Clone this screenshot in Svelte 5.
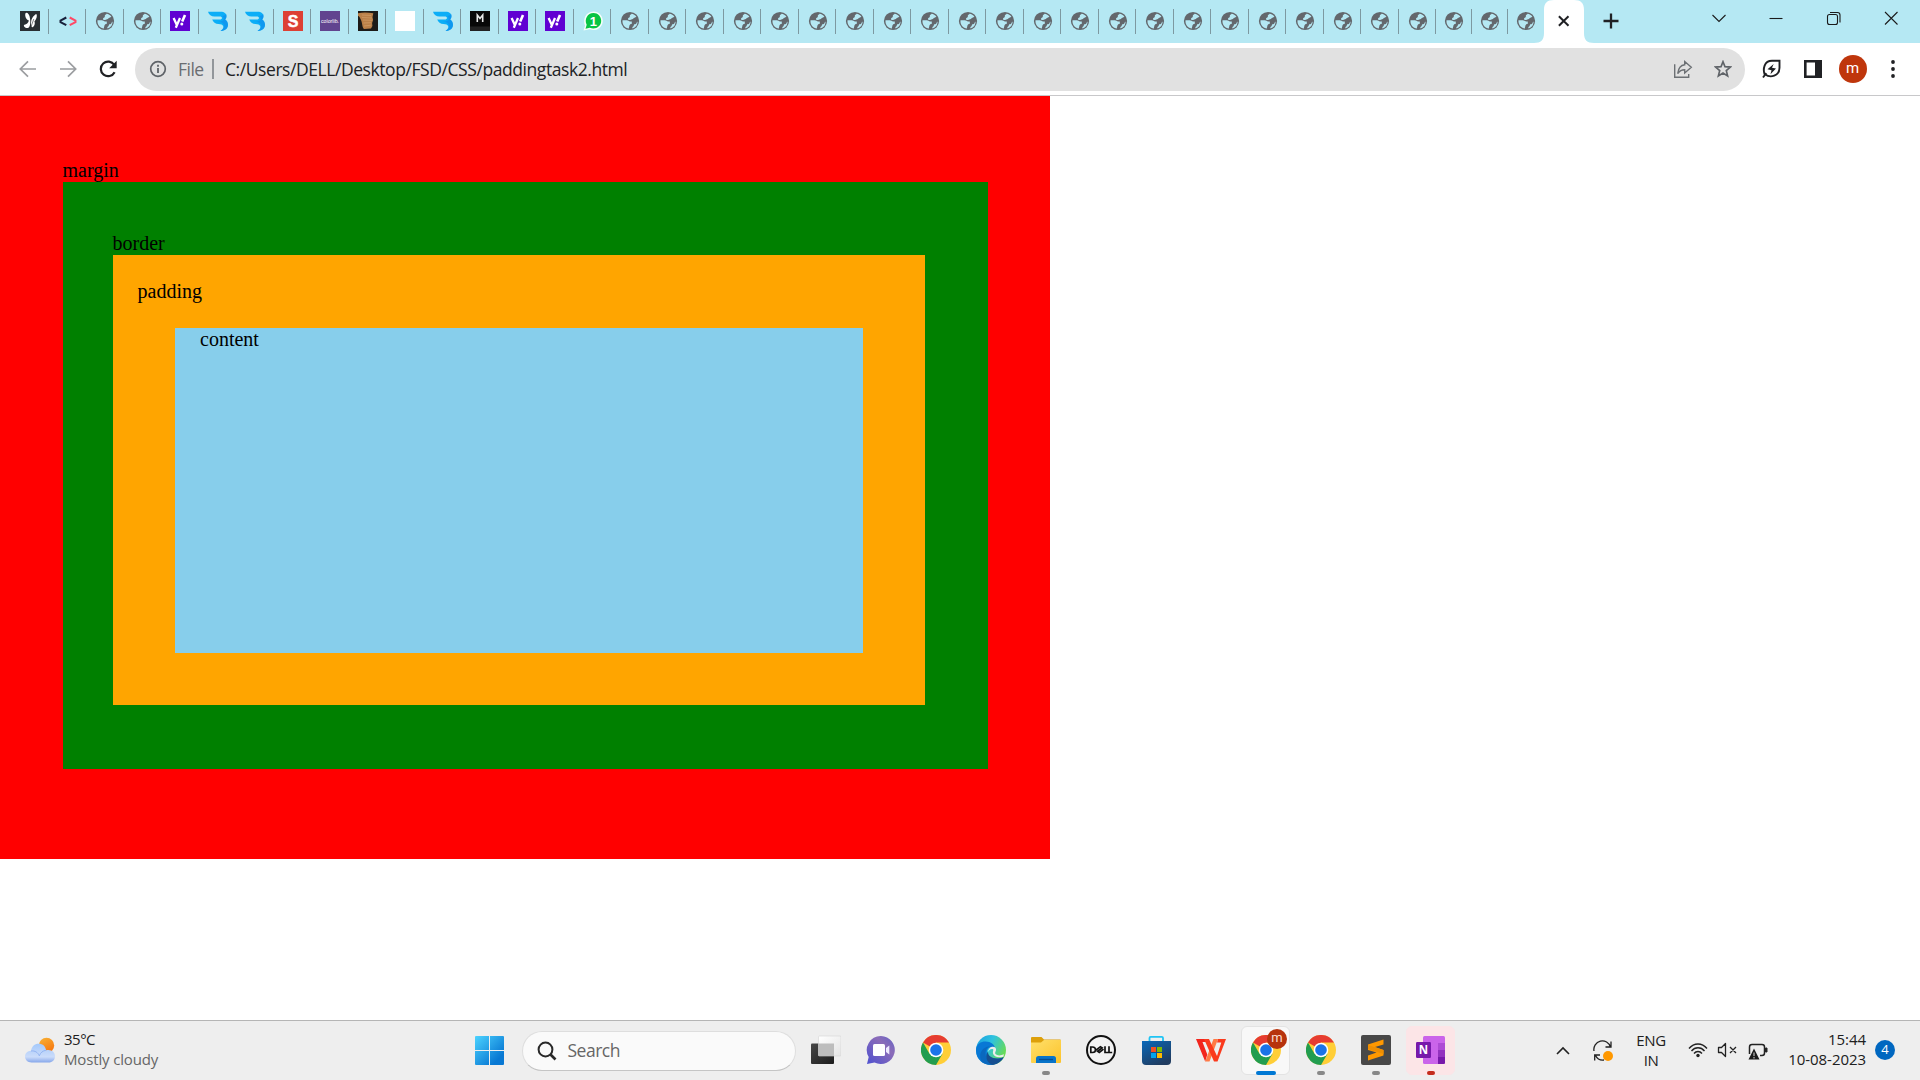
<script>
  const kinds = [
    'butterfly', 'code', 'globe', 'globe', 'yahoo', 'bee', 'bee', 'ess', 'colorlib', 'brown',
    'blank', 'bee', 'em', 'yahoo', 'yahoo', 'whatsapp',
    ...Array(25).fill('globe')
  ];
  const apps = [
    { icon: 'taskview' }, { icon: 'chat' }, { icon: 'chrome' }, { icon: 'edge' },
    { icon: 'explorer', mark: 'idle' }, { icon: 'dell' }, { icon: 'store' }, { icon: 'wps' },
    { icon: 'chrome', mark: 'current', badge: true }, { icon: 'chrome', mark: 'idle' },
    { icon: 'sublime', mark: 'idle' }, { icon: 'onenote', mark: 'alert' }
  ];
</script>

{#snippet favicon(kind)}
  <svg class="fav" viewBox="0 0 20 20">
    {#if kind === 'globe'}
      <circle cx="10" cy="10" r="9.100" fill="#63676c" />
      <path d="M11.500 2.700c2 .3 3.700 1.200 4.900 3-.8.2-1.100.8-1.900 1-.9.300-1.300 1.300-2.400 1.500-1.200.3-1.500.9-2.700.9-.9 0-1.500-.6-1.400-1.400.1-.9 1.300-.9 1.700-1.700.4-.7-.2-1.300.4-2 .5-.5 1.100-.5 1.400-1.300Z" fill="#b5e8f3" />
      <path d="M2.500 9.300h4.300c1.400 0 2.100 1.100 3.300 1.300h1.700v2.200c-.8.2-1.600.4-2.100 1.100-.5.700-.2 1.700-.8 2.500l.2 1.200C5 17.300 2.100 13.800 2.500 9.300Z" fill="#b5e8f3" />
      <path d="M17.500 10.500c.2 3.300-1.900 6.200-5 7l-.2-1.400c.9-.5 1.500-1.200 1.700-2.300.5-.9 1.800-.4 2.300-1.300.3-.7.400-1.500 1.200-2Z" fill="#b5e8f3" />
    {:else if kind === 'butterfly'}
      <rect width="20" height="20" fill="#292f33" />
      <path d="M8.900 9.500C5.500 8.600 4.700 4 5.500 2.300 6.200.6 9.600 2.200 10 7.500c.7 4.300.2 9.200-2.300 9.500-2.700.2-5-2.600-3.200-3.300 2-.3 3.700-1.700 4.400-4.200Z" fill="#fff" />
      <path d="M11.200 10c.6-3.200 3.200-6.400 5.200-7 1.200 2.300-.1 5.200-2 7.600 1 1.700 0 5-1.800 5.600-1.900.3-1.700-3.500-1.400-6.200Z" fill="#fff" />
      <path d="m13.800 8-2.900 8" stroke="#292f33" stroke-width=".6" fill="none" />
    {:else if kind === 'code'}
      <path d="M8.300 6.500 2.500 9.700v1.500l5.800 3" fill="none" stroke="#18203b" stroke-width="2" />
      <path d="m11.700 6.500 5.800 3.200v1.500l-5.800 3" fill="none" stroke="#ff4966" stroke-width="2" />
    {:else if kind === 'yahoo'}
      <rect width="20" height="20" fill="#6001d2" />
      <path d="m3.600 7 3 6.500M10 7l-4.200 9.700" stroke="#fff" stroke-width="2.300" fill="none" />
      <path d="m15 4-2.800 6.400" stroke="#fff" stroke-width="2.600" />
      <circle cx="11.800" cy="13" r="1.500" fill="#fff" />
    {:else if kind === 'bee'}
      <path d="M0 .7h12.500C16.500.7 18.700 2.800 18.500 5.500c-.1 1.300-.6 2.200-1.300 3C19 9.700 20 11.500 20 13.700c0 3.900-3.200 6.200-7.500 6.300 2.400-1.600 3.200-3.200 2.700-4.700-.5-1.700-2.300-2.100-4.700-2.200-3 0-5.400-1.900-6.300-4.600h7.500c1.500 0 2.300-.6 2.300-1.500s-.8-1.500-2.300-1.500H6.500C3.300 5.500.8 3.500 0 .7Z" fill="#0caef7" />
      <path d="M14.200 5C16 4.800 17.700 3.900 18.300 3c.5 2.200.1 4-1.100 5.500C19 9.700 20 11.500 20 13.700c0 3.900-3.200 6.200-7.500 6.300 5.700-4 4.500-8.500-2.500-9.500 5.500.3 7.300-2.600 4.200-5.500Z" fill="#1287ea" opacity=".55" />
    {:else if kind === 'ess'}
      <rect width="20" height="20" fill="#dd4034" /><text x="10" y="15.700" text-anchor="middle" font-size="16" font-weight="700" fill="#fff" stroke="#fff" stroke-width=".5">S</text>
    {:else if kind === 'colorlib'}
      <rect width="20" height="20" fill="#61448f" /><text x="1" y="12" font-size="5" textLength="18" lengthAdjust="spacingAndGlyphs" fill="#fff">colorlib.</text>
    {:else if kind === 'brown'}
      <rect width="20" height="20" fill="#1c1b18" />
      <path d="M0 2.200c5-1.100 10-.8 15.300 0L14.500 6l.6 3-1 3 .3 3-1.400 2.500-7 .5C4 16.300 4.500 12 3 9 2.200 7 1.700 5.500 0 4.700Z" fill="#b98048" />
      <path d="m4 4 9 .5M4 6.500l10 .5M5 9l9 .3M5.500 12l7.500-.3M6 15l7-.8" stroke="#cf9a64" stroke-width=".8" fill="none" />
    {:else if kind === 'blank'}
      <rect width="20" height="20" fill="#fff" />
    {:else if kind === 'em'}
      <rect width="20" height="20" fill="#080808" /><path d="M0 15.500h20V20H0Z" fill="#222" />
      <path d="M7.300 11V4L10 7.500 12.700 4v7" stroke="#e8e8e8" stroke-width="1.600" fill="none" />
    {:else}
      <path d="m.5 19.500 1.600-5C-.4 9 2.200.4 10.500.4c5.300 0 9.300 4.200 9.300 9.400 0 6.900-7 11.200-13 8.500Z" fill="#f5fff9" />
      <path d="m2.500 17.700 1.200-4C1 8.500 4.400 2 10.500 2c4.400 0 7.700 3.400 7.700 7.800 0 5.900-6.100 9.400-11.400 6.900Z" fill="#08c443" />
      <text x="10.300" y="14.500" text-anchor="middle" font-size="13" font-weight="700" fill="#fff">1</text>
    {/if}
  </svg>
{/snippet}

{#snippet appIcon(kind)}
  <svg class="app-icon" viewBox="0 0 30 30">
    {#if kind === 'taskview'}
      <rect x="0" y="8.500" width="23" height="20.500" rx="1" fill="url(#dark)" />
      <rect x="7.500" y="1" width="22.500" height="20" rx="1" fill="url(#pale)" stroke="#d5d5d5" stroke-width=".6" />
      <path d="M7.500 8.500H23V21H7.500Z" fill="#bdbdbd" />
    {:else if kind === 'chat'}
      <path d="M15 1a14 14 0 1 1-6.500 26.500L1 29l1.700-7A14 14 0 0 1 15 1Z" fill="url(#violet)" />
      <rect x="7" y="9" width="12" height="12" rx="1.500" fill="#fff" /><path d="m20 13 3.300-2.500v9L20 17Z" fill="#eeeaff" />
    {:else if kind === 'chrome'}
      <circle cx="15" cy="15" r="15" fill="#ffce37" />
      <path d="M15 15 2 7.500A15 15 0 0 1 28 7.500H15Z" fill="#e63c31" />
      <path d="m15 15-6.500 3.700L2 7.500A15 15 0 0 0 15 30l6.500-11.300Z" fill="#229d4f" />
      <circle cx="15" cy="15" r="7.300" fill="#fff" /><circle cx="15" cy="15" r="5.800" fill="#1a73e8" />
    {:else if kind === 'edge'}
      <circle cx="15" cy="15" r="15" fill="url(#aqua)" />
      <path d="M0 15C0 9 5 6.500 9.500 6.500c5.500 0 9 3 9.500 6.500-5-3-9 1-8 6 1 4.500 6 6 16.500 3.500C23 30 12 32 5 26.500A15 15 0 0 1 0 15Z" fill="#0878d5" />
      <path d="M15 11.300C10 12 8.500 17 10 21.500c1.500 4.600 5 7 8 8-4 1-8.500 0-12-2.500C1 19 7 11 15 11.300Z" fill="#0a68be" />
      <path d="M12 16.500c-.5 5.500 7 9 15.700 5.700C25 27 20 30 16 29.800c-6-2.800-7-9.300-4-13.300Z" fill="#164f91" />
      <path d="M12.300 17c0-3 2-5.200 4.500-5.200 2.300 0 3.700 1.700 3.200 3.500-.6 2.200-1.300 2.700-.5 3.700 1.600 1.900 5.600 1.700 8.500.2l-.7 2.500c-5.500 1.500-9.500-.2-10.300-3.300-.4-1.800.4-2.700.3-4-1.800-1-4.300.2-5 2.600Z" fill="#ededed" />
    {:else if kind === 'explorer'}
      <path d="M0 3q0-1 1-1h9.500L13 4.500h16q1 0 1 1V12H0Z" fill="#dda00b" />
      <path d="M0 7.500h10L13 5h17v22q0 1-1 1H1q-1 0-1-1Z" fill="url(#yellow)" />
      <path d="M5 28v-4.500q0-2.500 2.500-2.500h15q2.500 0 2.500 2.500V28Z" fill="#0874c9" /><path d="M8 24.500h14" stroke="#064e91" stroke-width="1.300" />
    {:else if kind === 'dell'}
      <circle cx="15" cy="15" r="14" fill="#f2f2f2" stroke="#111" stroke-width="2" />
      <path d="M4.800 12h1.700c4 0 4 5.500 0 5.500H4.800ZM10 15.200l4.400-3.500 1.700 1.100-4.500 3.500 1.700 1.100 4.200-3.300M11.600 16.300l4.500-3.500M19 11.300v6.200h3.200M23 11.300v6.200h3.200" fill="none" stroke="#111" stroke-width="1.700" />
    {:else if kind === 'store'}
      <path d="M8.500 7V3q0-1.200 1.200-1.200h11.100Q22 1.800 22 3v4" fill="none" stroke="#1fc4f4" stroke-width="1.800" />
      <path d="M1 6h29v20q0 4-4 4H5q-4 0-4-4Z" fill="url(#storeblue)" />
      <path d="M10 12h5v5h-5Z" fill="#f25022" /><path d="M16 12h5v5h-5Z" fill="#7fba00" /><path d="M10 18h5v5h-5Z" fill="#00a4ef" /><path d="M16 18h5v5h-5Z" fill="#ffb900" />
    {:else if kind === 'wps'}
      <path d="M0 4h11.500v3H6.500l4.800 12.500-2.100 7Z" fill="#f2251d" />
      <path d="M9.200 26.500 17.500 4H22l-8.500 22.500Z" fill="#ff7a45" />
      <path d="M8 4h5l8 17 4.300-13.500H21L22 4h8l-8.500 22.500H18Z" fill="#fa3a1d" />
    {:else if kind === 'sublime'}
      <rect width="30" height="30" rx="2" fill="#484848" />
      <path d="m7 9.500 15.500-5v5L14 12l8.500 3v5.500L7 25.500v-5l8.500-3L7 15Z" fill="#ff9800" /><path d="m7 10 15.500 5v4L7 14Z" fill="#ee8e02" />
    {:else}
      <rect x="7" y="1" width="22" height="28" rx="1.500" fill="#ca64ea" />
      <path d="M22 8h7v7h-7Z" fill="#ae4bd5" /><path d="M22 15h7v7h-7Z" fill="#9332bf" /><path d="M22 22h7v5.500q0 1.500-1.500 1.500H22Z" fill="#7719aa" />
      <rect x="0" y="7" width="15" height="16" rx="1.200" fill="#7719aa" /><text x="7.500" y="19" text-anchor="middle" font-size="11.500" font-weight="700" fill="#fff">N</text>
    {/if}
  </svg>
{/snippet}

<div class="screen">
  <svg class="defs" width="0" height="0">
    <defs>
      <linearGradient id="dark" x2="1" y2="1"><stop stop-color="#474747" /><stop offset="1" stop-color="#1c1c1c" /></linearGradient>
      <linearGradient id="pale" x2="1" y2="1"><stop stop-color="#fff" /><stop offset="1" stop-color="#e4e4e4" /></linearGradient>
      <linearGradient id="violet" x1="1" x2="0" y2="1"><stop stop-color="#6264c7" /><stop offset=".35" stop-color="#8b6cb8" /><stop offset="1" stop-color="#4e50d0" /></linearGradient>
      <linearGradient id="aqua" x2="1" y2=".5"><stop stop-color="#189ee0" /><stop offset=".5" stop-color="#2fc2df" /><stop offset="1" stop-color="#68db55" /></linearGradient>
      <linearGradient id="yellow" x2="1" y2="1"><stop stop-color="#ffe06b" /><stop offset="1" stop-color="#fcc32b" /></linearGradient>
      <linearGradient id="storeblue" x2=".6" y2="1"><stop stop-color="#0868ba" /><stop offset="1" stop-color="#203c60" /></linearGradient>
      <linearGradient id="win" x2="1" y2="1"><stop stop-color="#4cd3ff" /><stop offset=".8" stop-color="#0878d3" /></linearGradient>
      <linearGradient id="cloud" x2="0" y2="1"><stop stop-color="#a4c9fb" /><stop offset=".7" stop-color="#cbdcfa" /><stop offset="1" stop-color="#86a7ea" /></linearGradient>
      <linearGradient id="sun" x2=".5" y2="1"><stop stop-color="#f8b335" /><stop offset="1" stop-color="#f67811" /></linearGradient>
    </defs>
  </svg>

  <header class="tabs">
    {#each kinds as kind, i}
      <div class="tab" class:narrow={i > 37} class:last={i === 40}>{@render favicon(kind)}</div>
    {/each}
    <div class="active-tab">
      <svg width="60" height="43" viewBox="0 0 60 43"><path d="M0 43c7 0 10-3 10-10V10C10 3 13 0 20 0h20c7 0 10 3 10 10v23c0 7 3 10 10 10Z" fill="#fff" /><path d="m24.900 16.200 9.600 9.600m0-9.600-9.600 9.600" stroke="#202124" stroke-width="2" /></svg>
    </div>
    <svg class="plus" width="16" height="16" viewBox="0 0 16 16"><path d="M8 .5v15M.5 8h15" stroke="#202124" stroke-width="2.300" /></svg>
    <div class="window-controls">
      <svg viewBox="0 0 16 16"><path d="m1.500 5 6.500 6.500L14.500 5" /></svg>
      <svg viewBox="0 0 16 16"><path d="M1.500 8.500h13" /></svg>
      <svg viewBox="0 0 16 16"><rect x="1.500" y="4.500" width="10" height="10" rx="2" /><path d="M4 2.500h7.500q2.500 0 2.500 2.500v7.500" /></svg>
      <svg viewBox="0 0 16 16"><path d="m2 2 12.500 12.500M14.500 2 2 14.500" /></svg>
    </div>
  </header>

  <nav class="toolbar">
    <div class="nav-buttons">
      <svg viewBox="0 0 20 20"><path d="M18 10H2.500M10 2.300 2.300 10l7.700 7.700" fill="none" stroke="#9b9da0" stroke-width="1.700" /></svg>
      <svg viewBox="0 0 20 20"><path d="M2 10h15.500M10 2.300l7.700 7.700-7.700 7.700" fill="none" stroke="#9b9da0" stroke-width="1.700" /></svg>
      <svg viewBox="0 0 20 20"><path d="M16.600 13.200A7.300 7.300 0 1 1 16.300 6" fill="none" stroke="#202124" stroke-width="2.200" /><path d="M18.700 1.800v7.400h-7.500Z" fill="#202124" /></svg>
    </div>
    <div class="address">
      <svg class="info" viewBox="0 0 18 18"><circle cx="9" cy="9" r="7.300" fill="none" stroke="#5f6368" stroke-width="1.700" /><path d="M9 8v5M9 4.800v1.900" stroke="#5f6368" stroke-width="1.800" /></svg>
      <span class="scheme">File</span><i></i><span class="url">C:/Users/DELL/Desktop/FSD/CSS/paddingtask2.html</span>
      <svg class="share" viewBox="0 0 20 20"><path d="M1.700 5.300v13h14V15M4.700 14.500c.7-5.500 3-8.300 7-8.700V2.500l6.600 5.800-6.600 5.700v-3.200c-3.100 0-5.200 1.200-7 3.700Z" fill="none" stroke="#6c7074" stroke-width="1.400" /></svg>
      <svg class="star" viewBox="0 0 18 18"><path d="m9 1.700 2 5 5.400.4-4.100 3.500 1.300 5.300L9 13l-4.600 2.900 1.300-5.300L1.600 7.100 7 6.700Z" fill="none" stroke="#5f6368" stroke-width="1.700" /></svg>
    </div>
    <svg class="leaf" viewBox="0 0 20 20"><path d="M2.600 15.500C.8 10 2 1.800 10 1.800h7.500v7C17.500 17 8.300 19.500 3 15.200M4.300 14.200 1 18.500" fill="none" stroke="#202124" stroke-width="1.900" /><path d="M11.700 5 5.500 10.300l4 .9-1 4L14 9.500l-4-.8Z" fill="#202124" /></svg>
    <svg class="panel" viewBox="0 0 18 18"><path d="M1.300 1.300h15.400v15.400H1.300Z" fill="#fff" stroke="#202124" stroke-width="2.600" /><path d="M11 0h7v18h-7Z" fill="#202124" /></svg>
    <div class="avatar">m</div>
    <svg class="dots" viewBox="0 0 4 18" fill="#202124"><circle cx="2" cy="2" r="1.900" /><circle cx="2" cy="9" r="1.900" /><circle cx="2" cy="16" r="1.900" /></svg>
  </nav>

  <main>
    <div class="margin-box">margin
      <div class="border-box">border
        <div class="padding-box">padding
          <div class="content-box">content</div>
        </div>
      </div>
    </div>
  </main>

  <footer>
    <div class="weather">
      <svg viewBox="0 0 30 28"><circle cx="21.500" cy="8.500" r="7.700" fill="url(#sun)" /><path d="M6.500 25.500C2.600 25.500 0 23 0 19.600S2.600 14 6 13.700C7 9 9.500 6.700 13.500 6.700c4.500 0 7 2.700 7.600 6.500 5.200-1.300 8.900 1.900 8.900 6 0 3.800-2.700 6.300-6.500 6.300Z" fill="url(#cloud)" /><path d="M6 14c4-.6 7 1.600 8.300 4.800 1.300-3.400 3.500-5 6.800-5.600" fill="none" stroke="#8eb0ef" stroke-width=".9" /></svg>
      <div class="forecast"><p class="temp">35°C</p><p class="sky">Mostly cloudy</p></div>
    </div>
    <svg class="windows" viewBox="0 0 29 29"><path d="M0 1q0-1 1-1h13v14H0ZM15 0h13q1 0 1 1v13H15ZM0 15h14v14H1q-1 0-1-1ZM15 15h14v13q0 1-1 1H15Z" fill="url(#win)" /></svg>
    <div class="search"><svg viewBox="0 0 20 20"><circle cx="8.500" cy="8.500" r="6.900" fill="none" stroke="#292929" stroke-width="2" /><path d="m13.500 13.500 5 5" stroke="#292929" stroke-width="2.600" /></svg><span>Search</span></div>
    <div class="apps">
      {#each apps as app}
        <div class="app {app.mark ?? ''}">
          {@render appIcon(app.icon)}
          {#if app.badge}<b>m</b>{/if}
          {#if app.mark}<i></i>{/if}
        </div>
      {/each}
    </div>
    <div class="tray">
      <svg class="chev" viewBox="0 0 14 14"><path d="m1 10 6-6 6 6" fill="none" stroke="#222" stroke-width="1.600" /></svg>
      <svg class="sync" viewBox="0 0 22 22"><path d="M2 11A8.500 8.500 0 0 1 18.500 7M19 1.500V7h-5.500M12 20c-4 .5-7-1.500-8.500-4.500M2.700 20.500V15H8" fill="none" stroke="#222" stroke-width="1.300" /><circle cx="16" cy="16" r="5" fill="#ff9800" /></svg>
      <div class="lang"><p>ENG</p><p>IN</p></div>
      <svg class="wifi" viewBox="0 0 20 16"><path d="M1 6.500c5-6 13-6 18 0M3.500 9c3.600-4.300 9.400-4.300 13 0M6 11.500c2.200-2.700 5.800-2.700 8 0" fill="none" stroke="#222" stroke-width="1.400" /><circle cx="10" cy="13.500" r="1.700" fill="#222" /></svg>
      <svg class="volume" viewBox="0 0 20 16"><path d="M1.500 5.500h3l4-4v13l-4-4h-3ZM13 5l6 6m0-6-6 6" fill="none" stroke="#222" stroke-width="1.300" stroke-linejoin="round" /></svg>
      <svg class="battery" viewBox="0 0 20 18"><path d="M1.500 11V4q0-2.500 2.500-2.500h10q2.500 0 2.500 2.500v6q0 2.500-2.500 2.500h-2" fill="none" stroke="#222" stroke-width="1.500" /><path d="M17.500 5H19v4h-1.500Z" fill="#222" stroke="#222" /><path d="m6 5.500 5.500 11H.5Z" fill="#1a1a1a" /><path d="M6 9.500v3.600M6 14v1.500" stroke="#ddd" /></svg>
      <div class="clock"><p class="time">15:44</p><p class="date">10-08-2023</p></div>
      <div class="count">4</div>
    </div>
  </footer>
</div>

<style>
  :global(body) { margin: 0; overflow: hidden; }
  .screen { width: 1920px; height: 1080px; display: flex; flex-direction: column; background: #fff; font-family: "Open Sans", "Noto Sans", sans-serif; }
  .screen * { box-sizing: border-box; }
  .defs { display: block; height: 0; flex: none; }
  svg { display: block; flex: none; }
  p { margin: 0; white-space: nowrap; }
  .tabs { height: 43px; flex: none; display: flex; background: #b5e8f3; padding-left: 11.25px; }
  .tab { width: 37.5px; height: 43px; display: flex; flex: none; justify-content: center; padding-top: 11px; background: linear-gradient(#7d99a1, #7d99a1) right 9px / 1px 25px no-repeat; }
  .tab.narrow { width: 36.1px; }
  .tab.last { background: none; }
  .fav { width: 20px; height: 20px; overflow: visible; font-family: "Liberation Sans", Arial, sans-serif; }
  .active-tab { width: 60px; margin-left: -10.550px; flex: none; }
  .plus { margin: 13px 0 0 9px; }
  .window-controls { display: flex; gap: 41.300px; margin: 10px 21px 0 auto; }
  .window-controls svg { width: 16px; height: 16px; fill: none; stroke: #1b1b1b; stroke-width: 1.100; }

  .toolbar { height: 53px; flex: none; display: flex; align-items: center; border-bottom: 1px solid #c8c8ca; padding: 0 25.500px 0 17.5px; }
  .nav-buttons { display: flex; gap: 20px; width: 117.5px; }
  .nav-buttons svg { width: 20px; height: 20px; }
  .address { width: 1610px; height: 43px; border-radius: 22px; background: #e1e1e1; display: flex; align-items: center; padding: 0 13.500px 0 14px; font-size: 17.5px; }
  .info { width: 18px; height: 18px; }
  .scheme { width: 26px; margin-left: 11px; color: #6a6d71; white-space: nowrap; letter-spacing: -.5px; }
  .address i { width: 2px; height: 20px; background: #92969a; margin: 0 11px 0 8px; }
  .url { color: #202124; white-space: nowrap; letter-spacing: -.430px; }
  .share { width: 20px; height: 20px; margin-left: auto; }
  .star { width: 18px; height: 18px; margin-left: 20.500px; }
  .leaf { width: 20px; height: 20px; margin-left: 17px; }
  .panel { width: 18px; height: 18px; margin-left: 21.500px; }
  .avatar { width: 28px; height: 28px; border-radius: 50%; background: #bf360c; color: #fff; font-size: 15px; line-height: 26px; text-align: center; margin-left: 17px; font-family: Roboto, sans-serif; }
  .dots { width: 4px; height: 18px; margin-left: auto; }

  main { flex: 1; min-height: 0; background: #fff; font: 20px/23px "Liberation Serif", "Times New Roman", serif; color: #000; }
  .margin-box { width: 1050px; height: 763px; background: red; padding: 63px 62px 0 62.500px; }
  .border-box { height: 587px; background: green; padding: 50px 63px 0 50px; }
  .padding-box { height: 450px; background: orange; padding: 25px 62px 0 25px; }
  .content-box { width: 688px; height: 325px; background: skyblue; margin: 25px 0 0 37.500px; padding-left: 25px; }

  footer { height: 60px; flex: none; border-top: 1px solid #b5b5b5; background: #eee; display: flex; align-items: center; }
  .weather { width: 475px; display: flex; gap: 9px; padding-left: 25px; align-items: center; }
  .weather svg { width: 30px; height: 28px; }
  .weather p { font-size: 15px; line-height: 20px; }
  .forecast { padding-bottom: 4px; }
  .temp { color: #202020; letter-spacing: -.5px; }
  .sky { color: #666; letter-spacing: -.15px; }
  .windows { width: 29px; height: 29px; }
  .search { width: 274px; height: 40px; margin: 0 2px 0 17.500px; border: 1px solid #dedede; border-bottom-color: #c5c5c5; border-radius: 20px; background: #fafafa; display: flex; align-items: center; padding-left: 14px; }
  .search svg { width: 20px; height: 20px; }
  .search span { margin-left: 11px; font-size: 17.5px; color: #666; letter-spacing: -.5px; padding-bottom: 1px; }
  .apps { display: flex; margin-left: .5px; }
  .app { width: 55px; height: 49px; display: flex; justify-content: center; align-items: center; position: relative; padding: 0 3px 1px; }
  .app-icon { width: 30px; height: 30px; font-family: "Open Sans", sans-serif; }
  .app.current::before, .app.alert::before { content: ""; position: absolute; inset: 0 3px; border-radius: 6px; background: #f8f8f8; border: 1px solid #e3e3e3; }
  .app.alert::before { background: #fce5e7; border-color: #fce5e7; }
  .app svg { position: relative; }
  .app i { position: absolute; bottom: 0; left: 50%; width: 8px; margin-left: -4px; height: 4px; border-radius: 2px; background: #888; }
  .app.current i { width: 20px; margin-left: -10px; background: #0078d4; }
  .app.alert i { background: #c42b1c; }
  .app b { position: absolute; left: 29px; top: 3px; width: 20px; height: 20px; border-radius: 50%; background: #b7330d; color: #f9dcd2; font: 13px/18px Roboto, sans-serif; text-align: center; }
  .tray { margin-left: auto; display: flex; align-items: center; padding-right: 25px; color: #202020; font-size: 15px; }
  .chev { width: 14px; height: 14px; }
  .sync { width: 22px; height: 22px; margin-left: 22px; }
  .lang { width: 34px; margin-left: 20px; text-align: center; line-height: 20px; padding-bottom: 2px; }
  .lang p { letter-spacing: -.4px; }
  .wifi { width: 20px; height: 16px; margin: 0 0 2px 20px; }
  .volume { width: 20px; height: 16px; margin: 0 0 2px 9px; }
  .battery { width: 20px; height: 18px; margin: 2px 0 0 11px; }
  .clock { width: 80px; margin-left: 18px; text-align: right; line-height: 20px; padding-bottom: 4px; }
  .clock p { letter-spacing: -.05px; }
  .count { width: 20px; height: 20px; border-radius: 50%; background: #0067c0; color: #fff; font-size: 13px; line-height: 19px; text-align: center; margin: 0 0 2px 9px; }
</style>
